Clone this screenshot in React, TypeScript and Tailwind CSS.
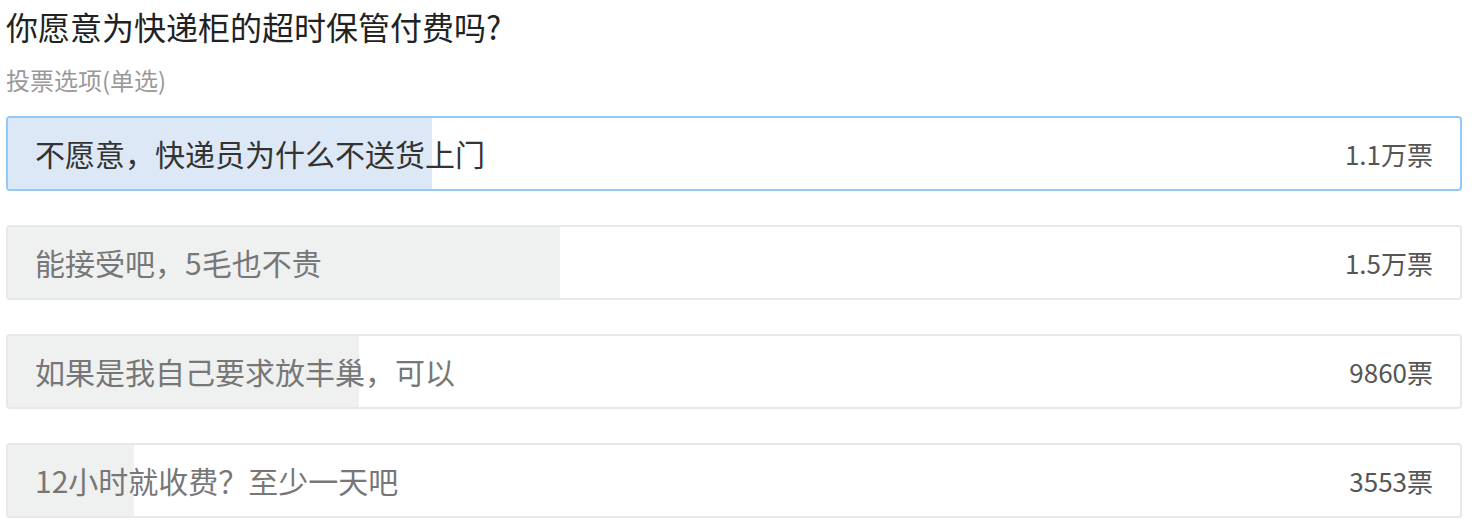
import React from 'react'

const options = [
  { label: '不愿意，快递员为什么不送货上门', votes: '1.1万票', width: '29.2%', active: true },
  { label: '能接受吧，5毛也不贵', votes: '1.5万票', width: '38%', active: false },
  { label: '如果是我自己要求放丰巢，可以', votes: '9860票', width: '24.2%', active: false },
  { label: '12小时就收费？至少一天吧', votes: '3553票', width: '8.7%', active: false },
]

export default function App() {
  return (
    <div
      className="w-[1474px] h-[530px] bg-white overflow-hidden"
      style={{ fontFamily: '"Noto Sans CJK SC", "Noto Sans", sans-serif' }}
    >
      <div className="pl-[6px] pr-[12px]">
        <h1 className="text-[32px] leading-[52px] text-[#222] font-normal">
          你愿意为快递柜的超时保管付费吗?
        </h1>
        <div className="mt-[12px] text-[24px] leading-[32px] text-[#999]">投票选项(单选)</div>
        <div className="mt-[20px] flex flex-col gap-[34px]">
          {options.map((o, i) => (
            <div
              key={i}
              className={
                o.active
                  ? 'relative h-[75px] rounded-[4px] border-2 border-[#93c9f7] bg-white overflow-hidden'
                  : 'relative h-[75px] rounded-[4px] border-2 border-[#e8e8e8] bg-white overflow-hidden'
              }
            >
              <div
                className={o.active ? 'absolute inset-y-0 left-0 bg-[#dce8f5]' : 'absolute inset-y-0 left-0 bg-[#eff0f0]'}
                style={{ width: o.width }}
              />
              <div className="relative flex h-full items-center justify-between pl-[27px] pr-[27px]">
                <span className={o.active ? 'text-[30px] text-[#333]' : 'text-[30px] text-[#777]'}>{o.label}</span>
                <span className="text-[26px] text-[#555]">{o.votes}</span>
              </div>
            </div>
          ))}
        </div>
      </div>
    </div>
  )
}
